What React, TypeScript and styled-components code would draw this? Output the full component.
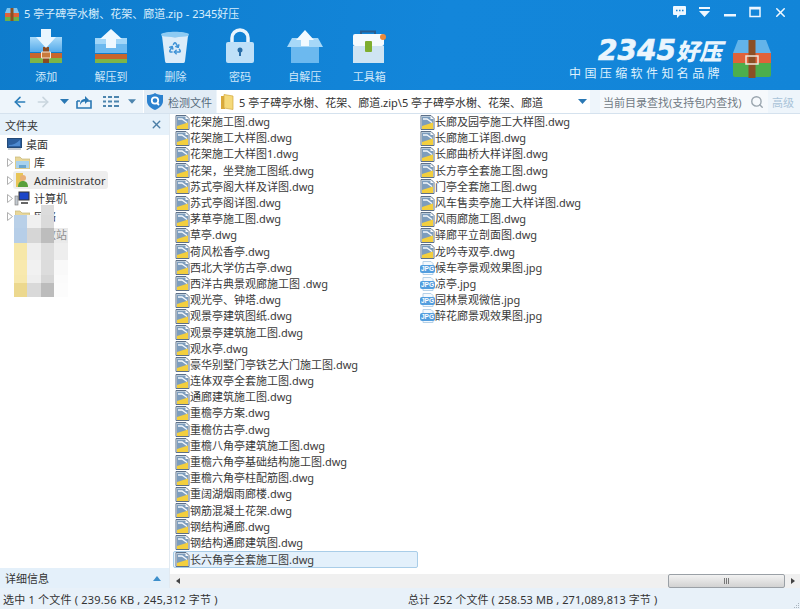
import * as React from 'react'
import styled, { createGlobalStyle } from 'styled-components'
import { ArrowLeft, ArrowRight, Recycle, Search, X } from 'lucide-react'

const files = [
    '花架施工图.dwg',
    '花架施工大样图.dwg',
    '花架施工大样图1.dwg',
    '花架，坐凳施工图纸.dwg',
    '苏式亭阁大样及详图.dwg',
    '苏式亭阁详图.dwg',
    '茅草亭施工图.dwg',
    '草亭.dwg',
    '荷风松香亭.dwg',
    '西北大学仿古亭.dwg',
    '西洋古典景观廊施工图 .dwg',
    '观光亭、钟塔.dwg',
    '观景亭建筑图纸.dwg',
    '观景亭建筑施工图.dwg',
    '观水亭.dwg',
    '豪华别墅门亭铁艺大门施工图.dwg',
    '连体双亭全套施工图.dwg',
    '通廊建筑施工图.dwg',
    '重檐亭方案.dwg',
    '重檐仿古亭.dwg',
    '重檐八角亭建筑施工图.dwg',
    '重檐六角亭基础结构施工图.dwg',
    '重檐六角亭柱配筋图.dwg',
    '重阔湖烟雨廊楼.dwg',
    '钢筋混凝土花架.dwg',
    '钢结构通廊.dwg',
    '钢结构通廊建筑图.dwg',
    '长六角亭全套施工图.dwg',
    '长廊及园亭施工大样图.dwg',
    '长廊施工详图.dwg',
    '长廊曲桥大样详图.dwg',
    '长方亭全套施工图.dwg',
    '门亭全套施工图.dwg',
    '风车售卖亭施工大样详图.dwg',
    '风雨廊施工图.dwg',
    '驿廊平立剖面图.dwg',
    '龙吟寺双亭.dwg',
    '候车亭景观效果图.jpg',
    '凉亭.jpg',
    '园林景观微信.jpg',
    '醉花廊景观效果图.jpg',
]

const mosaicCells = [
    'transparent', 'transparent', '#dcdcdc', 'transparent',
    '#b9d0e8', '#f0f0f0', '#dadada', 'transparent',
    '#b6cee8', '#d6d6d6', '#bdbdbd', 'rgba(216, 216, 216, 0.55)',
    '#f6e7a8', '#eeeeee', '#dddddd', '#eeeeee',
    '#f8e9ae', '#f1f1f1', '#dcdcdc', '#f9f9f9',
    '#f7e8ac', '#eeeeee', '#d6d6d6', '#fbfbfb',
    '#ecd88e', '#d9d9d9', '#bcbcbc', '#fcfcfc',
]

const TrianglePath = () => (
    <svg width="6" height="9" viewBox="0 0 6 9">
        <path d="M.5.5 5.500 4.500.5 8.500Z" fill="#fff" stroke="#b0b0b0" />
    </svg>
)

const Caret = ({ color = '#2a78b4' }: { color?: string }) => (
    <svg width="9" height="5" viewBox="0 0 9 5">
        <path d="M0 0h9L4.500 5Z" fill={color} />
    </svg>
)

const DwgIcon = () => (
    <svg width="15" height="15" viewBox="0 0 15 15">
        <path d="M1 .5h10l3 3v11H1Z" fill="#f7f9fb" stroke="#5d7088" />
        <path d="M2 1.500h8.500V4H13v7H2Z" fill="#7d9dbd" />
        <path d="M2 11 13 7.500V14H2Z" fill="#f3cf3e" />
        <path d="M3 4h4l5 3.500" fill="none" stroke="#f3f7fb" strokeWidth="1.400" />
    </svg>
)

const JpgIcon = () => (
    <svg width="15" height="14" viewBox="0 0 15 14">
        <path d="M3 .5h8l2 2v11H3Z" fill="#f4f9fd" stroke="#b5d1e8" />
        <rect x="0" y="4" width="15" height="8" rx="2" fill="#539ede" />
        <text x="7.500" y="10.300" fontSize="6.500" fontWeight="700" textAnchor="middle" fill="#fff" fontFamily="Liberation Sans, sans-serif">JPG</text>
    </svg>
)

const FolderIcon = () => (
    <svg width="14" height="17" viewBox="0 0 14 17">
        <path d="M1 3h4v13H1Z" fill="#d9a93a" />
        <path d="M4 1.500 13 3v13.500L4 15Z" fill="#f5d979" stroke="#d3a83d" strokeWidth=".7" />
    </svg>
)

const AddIcon = () => (
    <svg width="34" height="36" viewBox="0 0 34 36">
        <defs>
            <linearGradient id="boxFill" x1="0" y1="0" x2="0" y2="1">
                <stop offset="0" stopColor="#a9dbfa" />
                <stop offset="1" stopColor="#55aaea" />
            </linearGradient>
        </defs>
        <path d="M1 9h32v15H1Z" fill="url(#boxFill)" />
        <path d="M1 25h32v5H1Z" fill="#c8652c" />
        <path d="M1 30h32v5H1Z" fill="#7db548" />
        <path d="M14 19h6v16h-6Z" fill="#8a4a22" />
        <path d="M12.500 24h9v6h-9Z" fill="#c97a3d" stroke="#f4e6d8" />
        <path d="M12 1h10v8h5L17 20 7 9h5Z" fill="#e8f6ff" />
    </svg>
)

const ExtractIcon = () => (
    <svg width="34" height="36" viewBox="0 0 34 36">
        <path d="M1 10h32v15H1Z" fill="#6cb9ef" />
        <path d="M1 10h32v6H1Z" fill="#a2d6f8" />
        <path d="M1 26h32v5H1Z" fill="#c8652c" />
        <path d="M1 31h32v4H1Z" fill="#7db548" />
        <path d="M17 1 28 11h-6v9H12v-9H6Z" fill="#eef8ff" />
    </svg>
)

const DeleteIcon = () => (
    <svg width="30" height="36" viewBox="0 0 30 36">
        <path d="M1 6c4-3 24-3 28 0l-1 3H2Z" fill="#8ecbf3" />
        <path d="M2 8c6 1.500 20 1.500 26 0l-3 25c-.3 2-1 2-2.500 2h-15C6 35 5.300 35 5 33Z" fill="#dcecf9" />
        <Recycle x="8" y="13" width="14" height="14" color="#3f92d6" strokeWidth="2.600" />
    </svg>
)

const LockIcon = () => (
    <svg width="30" height="36" viewBox="0 0 30 36">
        <path d="M7 16V10a8 8 0 0 1 16 0v6" fill="none" stroke="#e8f4fd" strokeWidth="3.500" />
        <rect x="1" y="14" width="28" height="21" rx="2" fill="#bfe0f8" />
        <circle cx="15" cy="22" r="2.500" fill="#2a6ea8" />
        <path d="M14 23h2v5h-2Z" fill="#2a6ea8" />
    </svg>
)

const SelfExtractIcon = () => (
    <svg width="36" height="36" viewBox="0 0 36 36">
        <path d="M4 18h28v17H4Z" fill="#6cb9ef" />
        <path d="M0 19 5 10h26l5 9Z" fill="#a7d8f8" />
        <path d="M18 2 27 12h-5v6H14v-6H9Z" fill="#f2faff" />
    </svg>
)

const ToolboxIcon = () => (
    <svg width="36" height="36" viewBox="0 0 36 36">
        <path d="M10 7V3.500h14V7" fill="none" stroke="#2a5d8e" strokeWidth="2" />
        <rect x="2" y="6" width="31" height="12" rx="2" fill="#f5fafd" />
        <rect x="2" y="18" width="31" height="17" fill="#cfe4f3" />
        <rect x="14" y="13" width="7" height="11" rx="1" fill="#7fae2f" />
        <circle cx="32" cy="9" r="3" fill="#ec8a3a" />
    </svg>
)

const BrandBox = () => (
    <svg width="40" height="38" viewBox="0 0 40 38">
        <path d="M6 0h28l5 13H1Z" fill="#63b4ea" />
        <path d="M1 13h38v10H1Z" fill="#e0623a" />
        <path d="M1 23h38v12q0 2-2 2H3q-2 0-2-2Z" fill="#4cae4c" />
        <path d="M16.500 0h7v38h-7Z" fill="#8b4f25" />
        <rect x="14" y="16" width="12" height="8" fill="none" stroke="#eee6dc" strokeWidth="1.500" />
    </svg>
)

const tools = [
    { label: '添加', icon: <AddIcon /> },
    { label: '解压到', icon: <ExtractIcon /> },
    { label: '删除', icon: <DeleteIcon /> },
    { label: '密码', icon: <LockIcon /> },
    { label: '自解压', icon: <SelfExtractIcon /> },
    { label: '工具箱', icon: <ToolboxIcon /> },
]

const treeIcons: Record<string, React.ReactNode> = {
    desktop: (
        <svg width="15" height="12" viewBox="0 0 15 12">
            <rect x=".5" y=".5" width="14" height="9" fill="#2c5f9e" stroke="#234a78" />
            <path d="M2 7c4 0 8-2 11-5v6H2Z" fill="#4d8ad0" />
            <path d="M1 11h13" stroke="#8a98a6" />
        </svg>
    ),
    library: (
        <svg width="15" height="13" viewBox="0 0 15 13">
            <path d="M0 1h5l2 2h8v10H0Z" fill="#e8d79a" stroke="#c4b476" strokeWidth=".7" />
            <path d="M1 5h13v7H1Z" fill="#a8d2ee" />
            <path d="M4 9h7v3H4Z" fill="#6aa6cf" />
        </svg>
    ),
    user: (
        <svg width="14" height="16" viewBox="0 0 14 16">
            <path d="M1 1h7v14H1Z" fill="#e8c558" />
            <circle cx="8" cy="6" r="3" fill="#e9b078" />
            <path d="M3 15c0-4 2-6 5-6s5 2 5 6Z" fill="#58a03c" />
        </svg>
    ),
    computer: (
        <svg width="16" height="15" viewBox="0 0 16 15">
            <rect x="1" y="5" width="3" height="9" fill="#c3c9cf" stroke="#777" strokeWidth=".6" />
            <rect x="5" y="1" width="10" height="8" fill="#1c46c8" stroke="#333" />
            <path d="M7 11h7v2H7Z" fill="#666" />
        </svg>
    ),
}

const App = () => (
    <Window>
        <GlobalStyle />
        <Header>
            <TitleBar>
                <TitleIcon>
                    <svg width="14" height="14" viewBox="0 0 14 14">
                        <path d="M2 1h10l2 5H0Z" fill="#7ec4ee" />
                        <path d="M0 6h14v4H0Z" fill="#e0623a" />
                        <path d="M0 10h14v4H0Z" fill="#6ab04c" />
                        <path d="M5.500 1h3v13h-3Z" fill="#8b4f25" />
                    </svg>
                </TitleIcon>
                <Title>5 亭子碑亭水榭、花架、廊道.zip - 2345好压</Title>
                <Controls>
                    <Control>
                        <svg width="13" height="12" viewBox="0 0 13 12">
                            <path d="M1 0h11a1 1 0 0 1 1 1v7a1 1 0 0 1-1 1H7l-3 3V9H1a1 1 0 0 1-1-1V1a1 1 0 0 1 1-1Z" fill="#eef7ff" />
                            <path d="M3 4.500h1.500M6 4.500h1.500M9 4.500h1.500" stroke="#1480d0" strokeWidth="1.500" />
                        </svg>
                    </Control>
                    <Control>
                        <svg width="13" height="10" viewBox="0 0 13 10">
                            <path d="M1 0h11v2H1ZM1 4h11L6.500 10Z" fill="#eef7ff" />
                        </svg>
                    </Control>
                    <Control>
                        <svg width="12" height="12" viewBox="0 0 12 12">
                            <path d="M0 8h12v2.500H0Z" fill="#eef7ff" />
                        </svg>
                    </Control>
                    <Control>
                        <svg width="12" height="12" viewBox="0 0 12 12">
                            <rect x="1" y="1.500" width="10" height="9" fill="none" stroke="#eef7ff" strokeWidth="1.500" />
                            <path d="M1 1h10v2.500H1Z" fill="#eef7ff" />
                        </svg>
                    </Control>
                    <CloseControl>
                        <X size={15} color="#f2f9ff" strokeWidth={2.4} />
                    </CloseControl>
                </Controls>
            </TitleBar>
            <MainBar>
                <Tools>
                    {tools.map((tool) => (
                        <Tool key={tool.label}>
                            <ToolIcon>{tool.icon}</ToolIcon>
                            <ToolLabel>{tool.label}</ToolLabel>
                        </Tool>
                    ))}
                </Tools>
                <Brand>
                    <BrandText>
                        <BrandName>
                            <BrandDigits>2345</BrandDigits>好压
                        </BrandName>
                        <Slogan>中国压缩软件知名品牌</Slogan>
                    </BrandText>
                    <BrandMark>
                        <BrandBox />
                    </BrandMark>
                </Brand>
            </MainBar>
        </Header>
        <NavBar>
            <NavButton $width={24}>
                <ArrowLeft size={16} color="#2b7db9" strokeWidth={2.4} />
            </NavButton>
            <NavButton $width={22}>
                <ArrowRight size={16} color="#c9d5de" strokeWidth={2.4} />
            </NavButton>
            <NavButton $width={20}>
                <Caret />
            </NavButton>
            <NavButton $width={20}>
                <svg width="16" height="14" viewBox="0 0 16 14">
                    <path d="M1 6h3M11 6h4v7H1V6" fill="none" stroke="#2a78b4" strokeWidth="1.600" />
                    <path d="M4 10c0-4 2-6 5-6V1l4 4-4 4V6.500c-2 0-4 1-5 3.500Z" fill="#2a78b4" />
                </svg>
            </NavButton>
            <NavButton $width={34}>
                <svg width="16" height="11" viewBox="0 0 16 11">
                    <path d="M0 0h3v2H0ZM5 0h4v2H5ZM11 0h5v2h-5ZM0 4.500h3v2H0ZM5 4.500h4v2H5ZM11 4.500h5v2h-5ZM0 9h3v2H0ZM5 9h4v2H5ZM11 9h5v2h-5Z" fill="#4d85ae" />
                </svg>
            </NavButton>
            <NavButton $width={8}>
                <Caret color="#4d85ae" />
            </NavButton>
            <CheckFiles>
                <svg width="16" height="17" viewBox="0 0 16 17">
                    <path d="M8 0c2 1.500 5 2 8 2v6c0 4-3 7-8 9-5-2-8-5-8-9V2c3 0 6-.5 8-2Z" fill="#2c82cf" />
                    <circle cx="8" cy="7.500" r="3.200" fill="none" stroke="#fff" strokeWidth="1.800" />
                    <path d="m10 10 2 2" stroke="#fff" strokeWidth="1.800" />
                </svg>
                检测文件
            </CheckFiles>
            <Address>
                <FolderIcon />
                <AddressText>5 亭子碑亭水榭、花架、廊道.zip\5 亭子碑亭水榭、花架、廊道</AddressText>
                <Caret />
            </Address>
            <SearchBox>
                <SearchHint>当前目录查找(支持包内查找)</SearchHint>
                <Search size={14} color="#9aa5ae" strokeWidth={2.4} />
            </SearchBox>
            <Advanced>高级</Advanced>
        </NavBar>
        <Body>
            <LeftPane>
                <PaneHeader>
                    文件夹
                    <X size={13} color="#4b7ea6" strokeWidth={2.6} />
                </PaneHeader>
                <Tree>
                    <TreeRow>
                        <TreeLabel $flush>
                            <TreeIcon>{treeIcons.desktop}</TreeIcon>
                            桌面
                        </TreeLabel>
                    </TreeRow>
                    <TreeRow>
                        <Twisty><TrianglePath /></Twisty>
                        <TreeLabel>
                            <TreeIcon>{treeIcons.library}</TreeIcon>
                            库
                        </TreeLabel>
                    </TreeRow>
                    <TreeRow>
                        <Twisty><TrianglePath /></Twisty>
                        <TreeLabel $active>
                            <TreeIcon>{treeIcons.user}</TreeIcon>
                            Administrator
                        </TreeLabel>
                    </TreeRow>
                    <TreeRow>
                        <Twisty><TrianglePath /></Twisty>
                        <TreeLabel>
                            <TreeIcon>{treeIcons.computer}</TreeIcon>
                            计算机
                        </TreeLabel>
                    </TreeRow>
                    <TreeRow>
                        <Twisty><TrianglePath /></Twisty>
                        <TreeLabel>
                            <TreeIcon>{treeIcons.library}</TreeIcon>
                            网络
                        </TreeLabel>
                    </TreeRow>
                    <TreeRow>
                        <Twisty />
                        <TreeLabel>
                            <TreeIcon>{treeIcons.library}</TreeIcon>
                            回收站
                        </TreeLabel>
                    </TreeRow>
                </Tree>
                <Mosaic>
                    {mosaicCells.map((color, i) => (
                        <MosaicCell key={i} $color={color} />
                    ))}
                </Mosaic>
                <Details>
                    详细信息
                    <DetailsCaret />
                </Details>
            </LeftPane>
            <RightPane>
                <FileGrid>
                    {files.map((name) => (
                        <FileRow key={name} $selected={name === '长六角亭全套施工图.dwg'}>
                            <FileIcon>{name.endsWith('.jpg') ? <JpgIcon /> : <DwgIcon />}</FileIcon>
                            <FileName>{name}</FileName>
                        </FileRow>
                    ))}
                </FileGrid>
                <ScrollBar>
                    <ScrollArrow $direction="left" />
                    <ScrollTrack>
                        <ScrollThumb>
                            <Grip />
                        </ScrollThumb>
                    </ScrollTrack>
                    <ScrollArrow $direction="right" />
                </ScrollBar>
            </RightPane>
        </Body>
        <StatusBar>
            <StatusLeft>选中 1 个文件 ( 239.56 KB , 245,312 字节 )</StatusLeft>
            <StatusRight>总计 252 个文件 ( 258.53 MB , 271,089,813 字节 )</StatusRight>
            <ResizeGrip>
                <svg width="7" height="7" viewBox="0 0 7 7">
                    <path d="M5 1h1v1H5ZM3 3h1v1H3ZM5 3h1v1H5ZM1 5h1v1H1ZM3 5h1v1H3ZM5 5h1v1H5Z" fill="#a9b4be" />
                </svg>
            </ResizeGrip>
        </StatusBar>
    </Window>
)

const GlobalStyle = createGlobalStyle`
    html, body {
        margin: 0;
        padding: 0;
        background: #fff;
    }
    body {
        font-family: "Noto Sans", "Noto Sans CJK SC", sans-serif;
        font-size: 11px;
        color: #333;
    }
`

const Window = styled.div`
    display: flex;
    flex-direction: column;
    width: 800px;
    height: 609px;
    overflow: hidden;
`

const Header = styled.header`
    height: 90px;
    background: linear-gradient(100deg, #0e7ccc 0%, #1386da 55%, #1285d8 100%);
    color: #fff;
`

const TitleBar = styled.div`
    display: flex;
    align-items: center;
    height: 25px;
    padding: 3px 0 0 5px;
    box-sizing: border-box;
`

const TitleIcon = styled.span`
    display: flex;
    width: 19px;
`

const Title = styled.span`
    color: #d9eefc;
    line-height: 16px;
`

const Controls = styled.div`
    display: flex;
    align-items: center;
    margin-left: auto;
    padding-bottom: 4px;
`

const Control = styled.span`
    display: flex;
    justify-content: center;
    align-items: center;
    width: 25px;
    height: 16px;
`

const CloseControl = styled(Control)`
    width: 33px;
    padding-right: 7px;
    box-sizing: border-box;
`

const MainBar = styled.div`
    display: flex;
    justify-content: space-between;
    height: 65px;
    padding: 3px 28px 0 14px;
    box-sizing: border-box;
`

const Tools = styled.div`
    display: flex;
`

const Tool = styled.div`
    display: flex;
    flex-direction: column;
    align-items: center;
    width: 64.6px;
`

const ToolIcon = styled.div`
    display: flex;
    justify-content: center;
    height: 36px;
`

const ToolLabel = styled.span`
    margin-top: 4px;
    color: #cfe8fa;
    line-height: 18px;
`

const Brand = styled.div`
    display: flex;
    align-items: flex-start;
    gap: 10px;
    padding-top: 10px;
`

const BrandText = styled.div`
    display: flex;
    flex-direction: column;
    align-items: flex-end;
`

const BrandMark = styled.div`
    display: flex;
    margin-top: 2px;
`

const BrandName = styled.div`
    font-family: "Noto Sans CJK SC", sans-serif;
    font-size: 23px;
    font-weight: 900;
    font-style: italic;
    line-height: 24px;
    color: #eaf5fd;
`

const BrandDigits = styled.span`
    font-family: "DejaVu Sans", sans-serif;
    font-size: 28px;
    font-weight: 700;
    font-style: italic;
    -webkit-text-stroke: 0.7px #eaf5fd;
`

const Slogan = styled.div`
    margin: 3px -1px 0 0;
    font-family: "Noto Sans CJK SC", sans-serif;
    font-size: 12px;
    line-height: 14px;
    letter-spacing: 3.400px;
    color: #dff1fd;
`

const NavBar = styled.nav`
    display: flex;
    align-items: center;
    height: 24px;
    padding-left: 8px;
    box-sizing: border-box;
    background: #eef5fb;
    border-bottom: 1px solid #d5e2ee;
`

const NavButton = styled.span<{ $width: number }>`
    display: flex;
    justify-content: center;
    align-items: center;
    flex: none;
    width: ${(p) => p.$width}px;
`

const CheckFiles = styled.div`
    display: flex;
    align-items: center;
    gap: 5px;
    flex: none;
    width: 73px;
    height: 23px;
    margin-left: 7px;
    padding-left: 3px;
    box-sizing: border-box;
    background: #e2ecf5;
    border-left: 1px solid #fff;
    color: #55697a;
    white-space: nowrap;
`

const Address = styled.div`
    display: flex;
    align-items: center;
    flex: none;
    width: 373px;
    height: 23px;
    margin-left: 1px;
    padding: 0 3px 0 3px;
    box-sizing: border-box;
    background: #fff;
`

const AddressText = styled.span`
    flex: 1;
    margin-left: 5px;
    white-space: nowrap;
    color: #333;
`

const SearchBox = styled.div`
    display: flex;
    align-items: center;
    justify-content: space-between;
    flex: none;
    width: 168px;
    height: 23px;
    margin-left: 10px;
    padding: 0 4px 0 3px;
    box-sizing: border-box;
    background: #f6f9fc;
`

const SearchHint = styled.span`
    color: #707a84;
    white-space: nowrap;
`

const Advanced = styled.span`
    margin-left: 4px;
    color: #a9c3d8;
`

const Body = styled.main`
    display: flex;
    flex: 1;
    min-height: 0;
`

const LeftPane = styled.aside`
    position: relative;
    display: flex;
    flex-direction: column;
    flex: none;
    width: 170px;
    border-right: 1px solid #e2eaf1;
    box-sizing: border-box;
`

const PaneHeader = styled.div`
    display: flex;
    justify-content: space-between;
    align-items: center;
    height: 21px;
    padding: 0 6px 0 5px;
    background: #e6f1fa;
    color: #333;
`

const Tree = styled.div`
    display: flex;
    flex-direction: column;
    flex: 1;
`

const TreeRow = styled.div`
    display: flex;
    align-items: center;
    height: 18px;
    padding-left: 6px;
`

const Twisty = styled.span`
    display: flex;
    align-items: center;
    justify-content: center;
    width: 7px;
`

const TreeLabel = styled.div<{ $active?: boolean; $flush?: boolean }>`
    display: flex;
    align-items: center;
    gap: 4px;
    height: 18px;
    padding: 0 3px 0 ${(p) => (p.$flush ? '0' : '1px')};
    border-radius: 3px;
    background: ${(p) => (p.$active ? '#eeeeee' : 'transparent')};
    color: #333;
`

const TreeIcon = styled.span`
    display: flex;
    justify-content: center;
    width: 16px;
`

const Mosaic = styled.div`
    position: absolute;
    top: 91px;
    left: 14px;
    display: grid;
    grid-template-columns: 13px 14px 13px 14px;
    grid-template-rows: 10px 13px 15px 17px 15px 8px 14px;
`

const MosaicCell = styled.span<{ $color: string }>`
    background: ${(p) => p.$color};
`

const Details = styled.div`
    display: flex;
    justify-content: space-between;
    align-items: center;
    height: 20px;
    padding: 0 8px 0 5px;
    background: #e4f0fa;
    color: #333;
`

const DetailsCaret = styled.span`
    width: 0;
    height: 0;
    border-left: 4px solid transparent;
    border-right: 4px solid transparent;
    border-bottom: 5px solid #3d8fcb;
`

const RightPane = styled.section`
    display: flex;
    flex-direction: column;
    flex: 1;
    min-width: 0;
`

const FileGrid = styled.div`
    display: grid;
    grid-auto-flow: column;
    grid-template-rows: repeat(28, 16.2px);
    grid-auto-columns: 245px;
    flex: 1;
    padding-left: 3px;
    overflow: hidden;
`

const FileRow = styled.div<{ $selected?: boolean }>`
    display: flex;
    align-items: center;
    box-sizing: border-box;
    border: 1px solid ${(p) => (p.$selected ? '#a9cde8' : 'transparent')};
    border-radius: 2px;
    background: ${(p) => (p.$selected ? '#e3f0fb' : 'transparent')};
    margin-bottom: ${(p) => (p.$selected ? '-1px' : '0')};
`

const FileIcon = styled.span`
    display: flex;
    justify-content: center;
    flex: none;
    width: 16px;
`

const FileName = styled.span`
    white-space: nowrap;
    line-height: 14px;
    color: #3a3a3a;
`

const ScrollBar = styled.div`
    display: flex;
    align-items: center;
    flex: none;
    height: 14px;
    background: #f0f0f0;
`

const ScrollTrack = styled.div`
    display: flex;
    justify-content: flex-end;
    flex: 1;
`

const ScrollThumb = styled.div`
    display: flex;
    justify-content: center;
    align-items: center;
    width: 117px;
    height: 14px;
    box-sizing: border-box;
    border: 1px solid #9aa0a6;
    border-radius: 2px;
    background: linear-gradient(#f2f2f2, #d2d2d2);
`

const Grip = styled.span`
    width: 5px;
    height: 6px;
    background: repeating-linear-gradient(90deg, #777 0 1px, transparent 1px 2px);
`

const ScrollArrow = styled.span<{ $direction: 'left' | 'right' }>`
    flex: none;
    width: 0;
    height: 0;
    margin: 0 5px 0 6px;
    border-top: 3px solid transparent;
    border-bottom: 3px solid transparent;
    border-${(p) => (p.$direction === 'left' ? 'right' : 'left')}: 4px solid #444;
`

const StatusBar = styled.footer`
    display: grid;
    grid-template-columns: 408px 1fr auto;
    align-items: center;
    flex: none;
    height: 21px;
    background: #e8f1f9;
    color: #333;
`

const StatusLeft = styled.span`
    padding-left: 3px;
    letter-spacing: 0.2px;
`

const StatusRight = styled.span`
    white-space: nowrap;
    letter-spacing: 0.1px;
`

const ResizeGrip = styled.span`
    display: flex;
    align-self: end;
`

export default App
